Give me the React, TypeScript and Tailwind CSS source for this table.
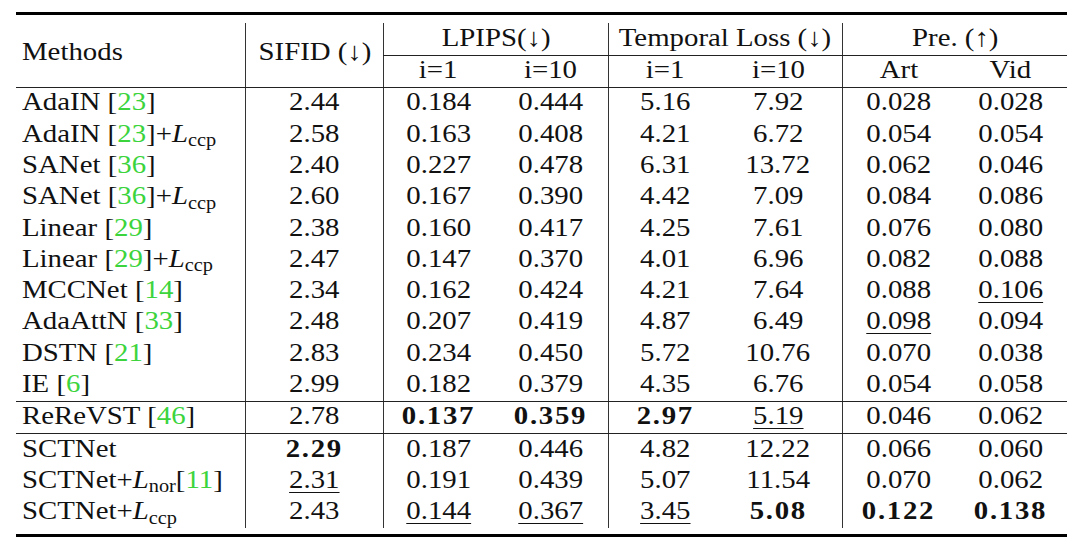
import type { ReactNode } from 'react'
import clsx from 'clsx'

// Column tracks: Methods | SIFID | LPIPS i=1 | i=10 | Temporal i=1 | i=10 | Art | Vid
const COLS = 'grid grid-cols-[229px_138px_110px_115px_114px_120px_112px_113px]'

// The source table is set in a wide face, so each label is widened a little
function T({ children, left }: { children: ReactNode; left?: boolean }) {
  return (
    <span
      className={clsx(
        'inline-block whitespace-nowrap scale-x-[1.13]',
        left ? 'origin-left' : 'origin-center'
      )}
    >
      {children}
    </span>
  )
}

function Cite({ n }: { n: string }) {
  return (
    <>
      [<span className="text-[#3cd43c]">{n}</span>]
    </>
  )
}

function Loss({ sub }: { sub: string }) {
  return (
    <>
      +<i>L</i>
      <sub className="text-[18px]">{sub}</sub>
    </>
  )
}

interface Row {
  method: ReactNode
  values: string[]
}

// 'b:' marks a bold (best) value, 'u:' an underlined (second best) one
const block1: Row[] = [
  { method: <>AdaIN <Cite n="23" /></>, values: ['2.44', '0.184', '0.444', '5.16', '7.92', '0.028', '0.028'] },
  { method: <>AdaIN <Cite n="23" /><Loss sub="ccp" /></>, values: ['2.58', '0.163', '0.408', '4.21', '6.72', '0.054', '0.054'] },
  { method: <>SANet <Cite n="36" /></>, values: ['2.40', '0.227', '0.478', '6.31', '13.72', '0.062', '0.046'] },
  { method: <>SANet <Cite n="36" /><Loss sub="ccp" /></>, values: ['2.60', '0.167', '0.390', '4.42', '7.09', '0.084', '0.086'] },
  { method: <>Linear <Cite n="29" /></>, values: ['2.38', '0.160', '0.417', '4.25', '7.61', '0.076', '0.080'] },
  { method: <>Linear <Cite n="29" /><Loss sub="ccp" /></>, values: ['2.47', '0.147', '0.370', '4.01', '6.96', '0.082', '0.088'] },
  { method: <>MCCNet <Cite n="14" /></>, values: ['2.34', '0.162', '0.424', '4.21', '7.64', '0.088', 'u:0.106'] },
  { method: <>AdaAttN <Cite n="33" /></>, values: ['2.48', '0.207', '0.419', '4.87', '6.49', 'u:0.098', '0.094'] },
  { method: <>DSTN <Cite n="21" /></>, values: ['2.83', '0.234', '0.450', '5.72', '10.76', '0.070', '0.038'] },
  { method: <>IE <Cite n="6" /></>, values: ['2.99', '0.182', '0.379', '4.35', '6.76', '0.054', '0.058'] },
]

const block2: Row[] = [
  { method: <>ReReVST <Cite n="46" /></>, values: ['2.78', 'b:0.137', 'b:0.359', 'b:2.97', 'u:5.19', '0.046', '0.062'] },
]

const block3: Row[] = [
  { method: <>SCTNet</>, values: ['b:2.29', '0.187', '0.446', '4.82', '12.22', '0.066', '0.060'] },
  { method: <>SCTNet<Loss sub="nor" /><Cite n="11" /></>, values: ['u:2.31', '0.191', '0.439', '5.07', '11.54', '0.070', '0.062'] },
  { method: <>SCTNet<Loss sub="ccp" /></>, values: ['2.43', 'u:0.144', 'u:0.367', 'u:3.45', 'b:5.08', 'b:0.122', 'b:0.138'] },
]

// columns that carry a vertical rule on their left edge
const ruled = [1, 2, 4, 6]

function Value({ raw }: { raw: string }) {
  const bold = raw.startsWith('b:')
  const under = raw.startsWith('u:')
  const text = bold || under ? raw.slice(2) : raw
  return (
    <T>
      <span
        className={clsx(
          bold && 'font-bold tracking-[1.5px]',
          under && 'underline decoration-1 underline-offset-[4px]'
        )}
      >
        {text}
      </span>
    </T>
  )
}

function DataRow({ row }: { row: Row }) {
  return (
    <div className={clsx(COLS, 'h-[31.3px]')}>
      <div className="flex items-center pl-[6px] pb-[3px]">
        <T left>{row.method}</T>
      </div>
      {row.values.map((v, i) => (
        <div
          key={i}
          className={clsx(
            'flex items-center justify-center pb-[3px]',
            ruled.includes(i + 1) && 'border-l border-[#333]',
            i === 4 && 'pr-2'
          )}
        >
          <Value raw={v} />
        </div>
      ))}
    </div>
  )
}

function Rule() {
  return <div className="h-px bg-[#222]" />
}

export default function App() {
  return (
    <div className="min-h-[551px] w-[1080px] bg-white pt-[12px] pl-[16px] font-['Liberation_Serif',serif] text-[25.5px] leading-none text-[#111]">
      <div className="w-[1051px]">
        {/* top rule */}
        <div className="h-[3px] bg-black" />

        {/* two-level header */}
        <div className={clsx(COLS, 'mt-[8px] grid-rows-[32px_1px_31px]')}>
          <div className="row-span-3 flex items-center pl-[6px] pb-[6px]">
            <T left>Methods</T>
          </div>
          <div className="row-span-3 flex items-center justify-center border-l border-[#333] pb-[6px]">
            <T>SIFID (↓)</T>
          </div>
          <div className="col-span-2 flex items-center justify-center border-l border-[#333] pb-[2px]">
            <T>LPIPS(↓)</T>
          </div>
          <div className="col-span-2 flex items-center justify-center border-l border-[#333] pb-[2px]">
            <T>Temporal Loss (↓)</T>
          </div>
          <div className="col-span-2 flex items-center justify-center border-l border-[#333] pb-[2px]">
            <T>Pre. (↑)</T>
          </div>
          <div className="col-span-6 bg-[#222]" />
          <div className="flex items-center justify-center border-l border-[#333] pb-[3px]">
            <T>i=1</T>
          </div>
          <div className="flex items-center justify-center pb-[3px]">
            <T>i=10</T>
          </div>
          <div className="flex items-center justify-center border-l border-[#333] pb-[3px]">
            <T>i=1</T>
          </div>
          <div className="flex items-center justify-center pr-2 pb-[3px]">
            <T>i=10</T>
          </div>
          <div className="flex items-center justify-center border-l border-[#333] pb-[3px]">
            <T>Art</T>
          </div>
          <div className="flex items-center justify-center pb-[3px]">
            <T>Vid</T>
          </div>
        </div>

        <Rule />
        {block1.map((r, i) => (
          <DataRow key={i} row={r} />
        ))}
        <Rule />
        {block2.map((r, i) => (
          <DataRow key={i} row={r} />
        ))}
        <Rule />
        {block3.map((r, i) => (
          <DataRow key={i} row={r} />
        ))}

        {/* bottom rule */}
        <div className="mt-[6px] h-[3px] bg-black" />
      </div>
    </div>
  )
}
